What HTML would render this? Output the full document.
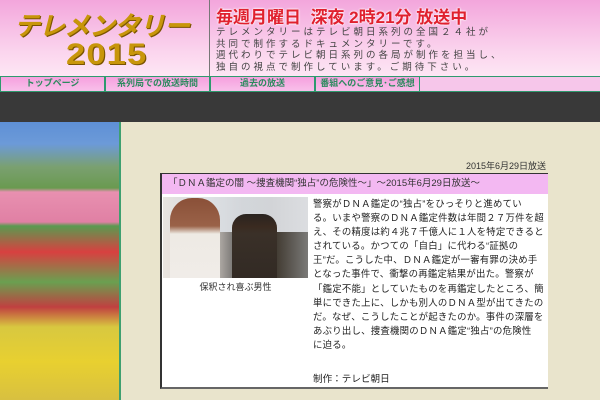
<!DOCTYPE html>
<html><head><meta charset="utf-8"><style>
*{margin:0;padding:0;box-sizing:border-box}
body{width:600px;height:400px;overflow:hidden;background:#e9e4cc;font-family:"Liberation Sans","Noto Sans CJK JP",sans-serif;position:relative}
.a{position:absolute}
.n{width:105px;border:1px solid #2e9a6e;background:linear-gradient(#f6a0de,#f8c0ea);font-size:9px;font-weight:bold;color:#2c8a5e;text-align:center;line-height:13px}
</style></head><body>
<div class="a" style="left:0;top:0;width:600px;height:76px;background:linear-gradient(#f3a6dc,#fbd6ee 70%,#fde6f4)"></div>
<div class="a" style="left:209px;top:0;width:1px;height:76px;background:#777"></div>
<div class="a" style="left:14px;top:6px;font-size:26px;font-weight:bold;font-style:italic;color:#c8960a;letter-spacing:-1px;text-shadow:1px 1px 0 #7a5400;white-space:nowrap">テレメンタリー</div>
<div class="a" style="left:66px;top:38px;font-size:30px;font-weight:bold;color:#c8960a;letter-spacing:1px;text-shadow:1px 1px 0 #7a5400;transform:scaleX(1.15);transform-origin:left">2015</div>
<div class="a" style="left:216px;top:3px;font-size:17px;font-weight:bold;color:#e0202e;white-space:nowrap;text-shadow:0 0 2px #fff,0 0 2px #fff">毎週月曜日&nbsp; 深夜 2時21分 放送中</div>
<div class="a" style="left:216px;top:27px;width:380px;font-size:9.5px;line-height:11.5px;color:#444;letter-spacing:3px;white-space:nowrap">テレメンタリーはテレビ朝日系列の全国２４社が<br>共同で制作するドキュメンタリーです。<br>週代わりでテレビ朝日系列の各局が制作を担当し、<br>独自の視点で制作しています。ご期待下さい。</div>
<div class="a" style="left:0;top:76px;width:600px;height:16px;background:#f6c6ea;border-top:1px solid #2e9a6e;border-bottom:1px solid #2e9a6e"></div>
<div class="a" style="left:0;top:76px;width:420px;height:16px;display:flex">
<div class="n">トップページ</div><div class="n">系列局での放送時間</div><div class="n">過去の放送</div><div class="n">番組へのご意見･ご感想</div>
</div>
<div class="a" style="left:0;top:92px;width:600px;height:30px;background:#393939"></div>
<div class="a" style="left:0;top:122px;width:119px;height:278px;background:linear-gradient(#5e90d6 0,#6c9ad8 22px,#7aa070 45px,#6a9a50 66px,#e890b0 70px,#e080a4 100px,#5a9a50 104px,#d84040 130px,#6aa050 160px,#c04040 185px,#d8c840 205px,#e8d030 240px,#d8c040 278px)"></div>
<div class="a" style="left:119px;top:122px;width:2px;height:278px;background:#3ea070"></div>
<div class="a" style="left:300px;top:159px;width:246px;text-align:right;font-size:9px;color:#333">2015年6月29日放送</div>
<div class="a" style="left:160px;top:173px;width:388px;height:216px;background:#fff;border-left:2px solid #333;border-top:1px solid #333;border-bottom:2px solid #666"></div>
<div class="a" style="left:162px;top:174px;width:386px;height:20px;background:#f3b8f2;font-size:9.5px;line-height:20px;padding-left:6px;color:#333;white-space:nowrap">「ＤＮＡ鑑定の闇 ～捜査機関“独占”の危険性～」～2015年6月29日放送～</div>
<div class="a" style="left:163px;top:197px;width:145px;height:81px;background:linear-gradient(90deg,#e8e4e0 0,#e0d8d0 30%,#555 55%,#3a3228 75%,#7a7a78 100%)"></div>
<div class="a" style="left:163px;top:197px;width:145px;height:35px;background:linear-gradient(90deg,rgba(0,0,0,0) 0,rgba(220,225,230,.9) 20%,rgba(230,232,236,.9) 100%)"></div>
<div class="a" style="left:170px;top:198px;width:50px;height:80px;background:linear-gradient(#8a5038,#9a6248 35%,#eeeae4 45%,#f0ece8);border-radius:22px 22px 0 0"></div>
<div class="a" style="left:232px;top:214px;width:45px;height:64px;background:linear-gradient(#2a2420 0,#3a2a20 20%,#3a3028 30%,#322a24);border-radius:14px 14px 0 0"></div>
<div class="a" style="left:163px;top:280px;width:145px;text-align:center;font-size:9px;color:#333">保釈され喜ぶ男性</div>
<div class="a" style="left:313px;top:197px;font-size:9.4px;line-height:14.1px;color:#222;letter-spacing:0.25px;white-space:nowrap">警察がＤＮＡ鑑定の“独占”をひっそりと進めてい<br>る。いまや警察のＤＮＡ鑑定件数は年間２７万件を超<br>え、その精度は約４兆７千億人に１人を特定できると<br>されている。かつての「自白」に代わる“証拠の<br>王”だ。こうした中、ＤＮＡ鑑定が一審有罪の決め手<br>となった事件で、衝撃の再鑑定結果が出た。警察が<br>「鑑定不能」としていたものを再鑑定したところ、簡<br>単にできた上に、しかも別人のＤＮＡ型が出てきたの<br>だ。なぜ、こうしたことが起きたのか。事件の深層を<br>あぶり出し、捜査機関のＤＮＡ鑑定“独占”の危険性<br>に迫る。</div>
<div class="a" style="left:313px;top:371px;font-size:9.6px;color:#222">制作：テレビ朝日</div>
</body></html>
